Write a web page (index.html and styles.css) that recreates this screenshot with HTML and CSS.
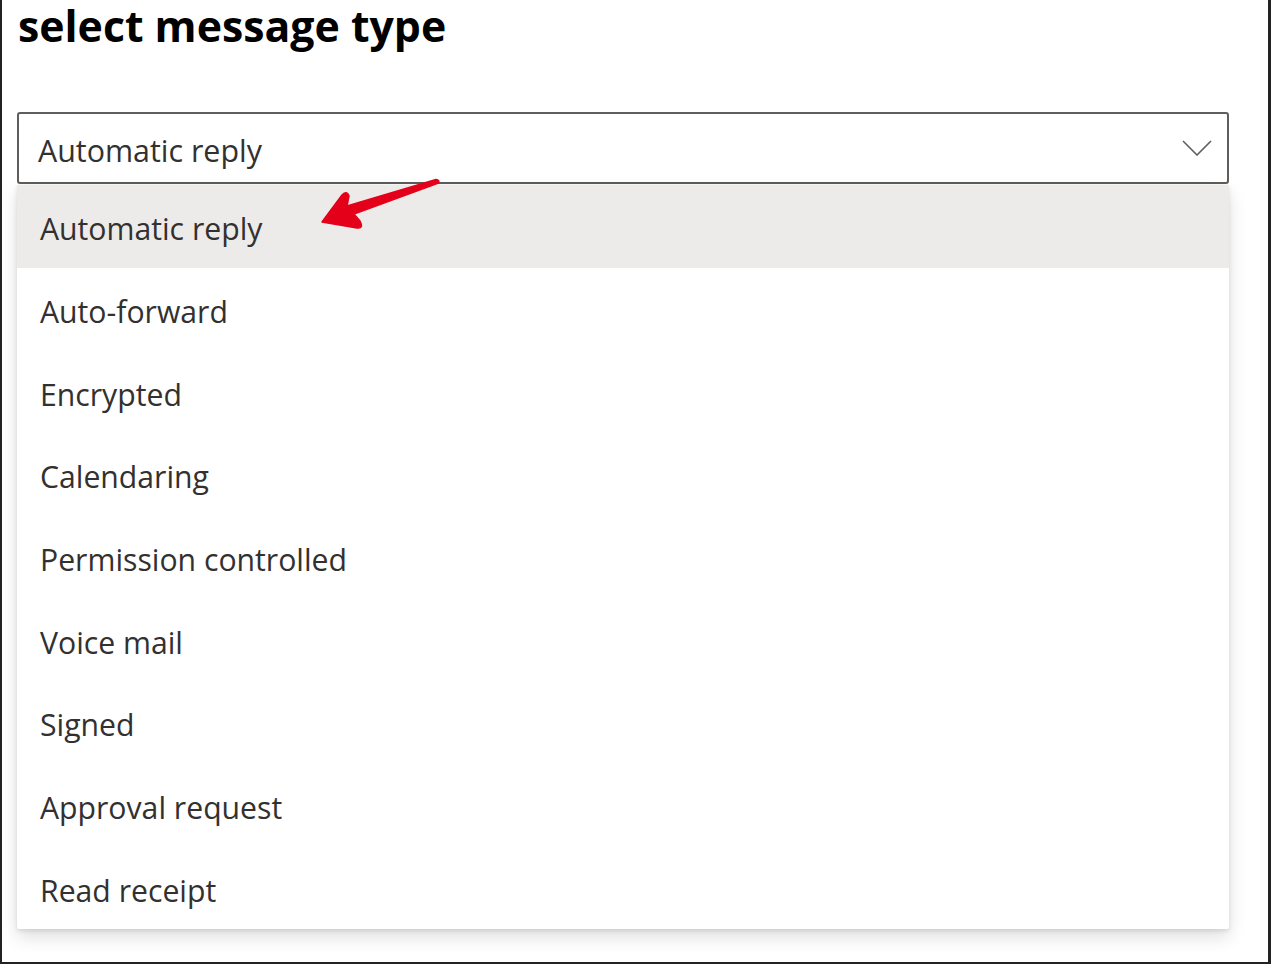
FILE: index.html
```html
<!DOCTYPE html>
<html lang="en">
<head>
<meta charset="utf-8">
<title>select message type</title>
<link rel="stylesheet" href="styles.css">
</head>
<body>
<div class="frame">
  <h1 class="title">select message type</h1>
  <div class="dropdown">
    <div class="select">
      <span class="select-text">Automatic reply</span>
      <svg class="chevron" width="30" height="16" viewBox="0 0 30 16" aria-hidden="true"><path d="M1 1 L15 15 L29 1" fill="none" stroke="#605e5c" stroke-width="1.6"/></svg>
    </div>
    <ul class="menu">
      <li class="item selected">Automatic reply</li>
      <li class="item">Auto-forward</li>
      <li class="item">Encrypted</li>
      <li class="item">Calendaring</li>
      <li class="item">Permission controlled</li>
      <li class="item">Voice mail</li>
      <li class="item">Signed</li>
      <li class="item">Approval request</li>
      <li class="item">Read receipt</li>
    </ul>
  </div>
  <svg class="arrow" width="130" height="60" viewBox="310 172 130 60" aria-hidden="true">
    <path d="M320 222 L340 195 Q345 190 347 196 L345 206 L434 179.5 Q438 180 436.5 183 L352 214 L358 221 Q362 229 355 228 Z" fill="#e5001a" stroke="#e5001a" stroke-width="1.5" stroke-linejoin="round"/>
  </svg>
</div>
</body>
</html>
```
FILE: styles.css
```css
* { box-sizing: border-box; }
html, body { margin: 0; padding: 0; background: #fff; }
body { font-family: "Open Sans", "Noto Sans", sans-serif; color: #323130; }
.frame {
  position: relative;
  width: 1271px;
  height: 964px;
  border-left: 2px solid #222;
  border-right: 3px solid #222;
  border-bottom: 2px solid #222;
  padding-left: 15px;
  overflow: hidden;
}
.title {
  margin: 0 0 0 1px;
  font-size: 42.8px;
  font-weight: 700;
  line-height: 50px;
  color: #000;
  height: 112px;
  padding-top: 1px;
}
.dropdown { width: 1212px; }
.select {
  height: 72px;
  border: 2px solid #605e5c;
  border-radius: 3px;
  display: flex;
  align-items: center;
  justify-content: space-between;
  padding: 4px 15px 0 19px;
}
.select-text { font-size: 30.4px; }
.chevron { display: block; margin-top: -4px; }
.menu {
  list-style: none;
  margin: 1px 0 0;
  padding: 0;
  background: #fff;
  border-radius: 2px;
  box-shadow: 0 8px 18px rgba(0,0,0,.13), 0 1.5px 4px rgba(0,0,0,.1);
}
.item {
  height: 82.67px;
  display: flex;
  align-items: center;
  padding-left: 23px;
  padding-top: 5px;
  font-size: 30.2px;
}
.item.selected { background: #edebe9; }
.arrow { position: absolute; left: 310px; top: 172px; }
```
